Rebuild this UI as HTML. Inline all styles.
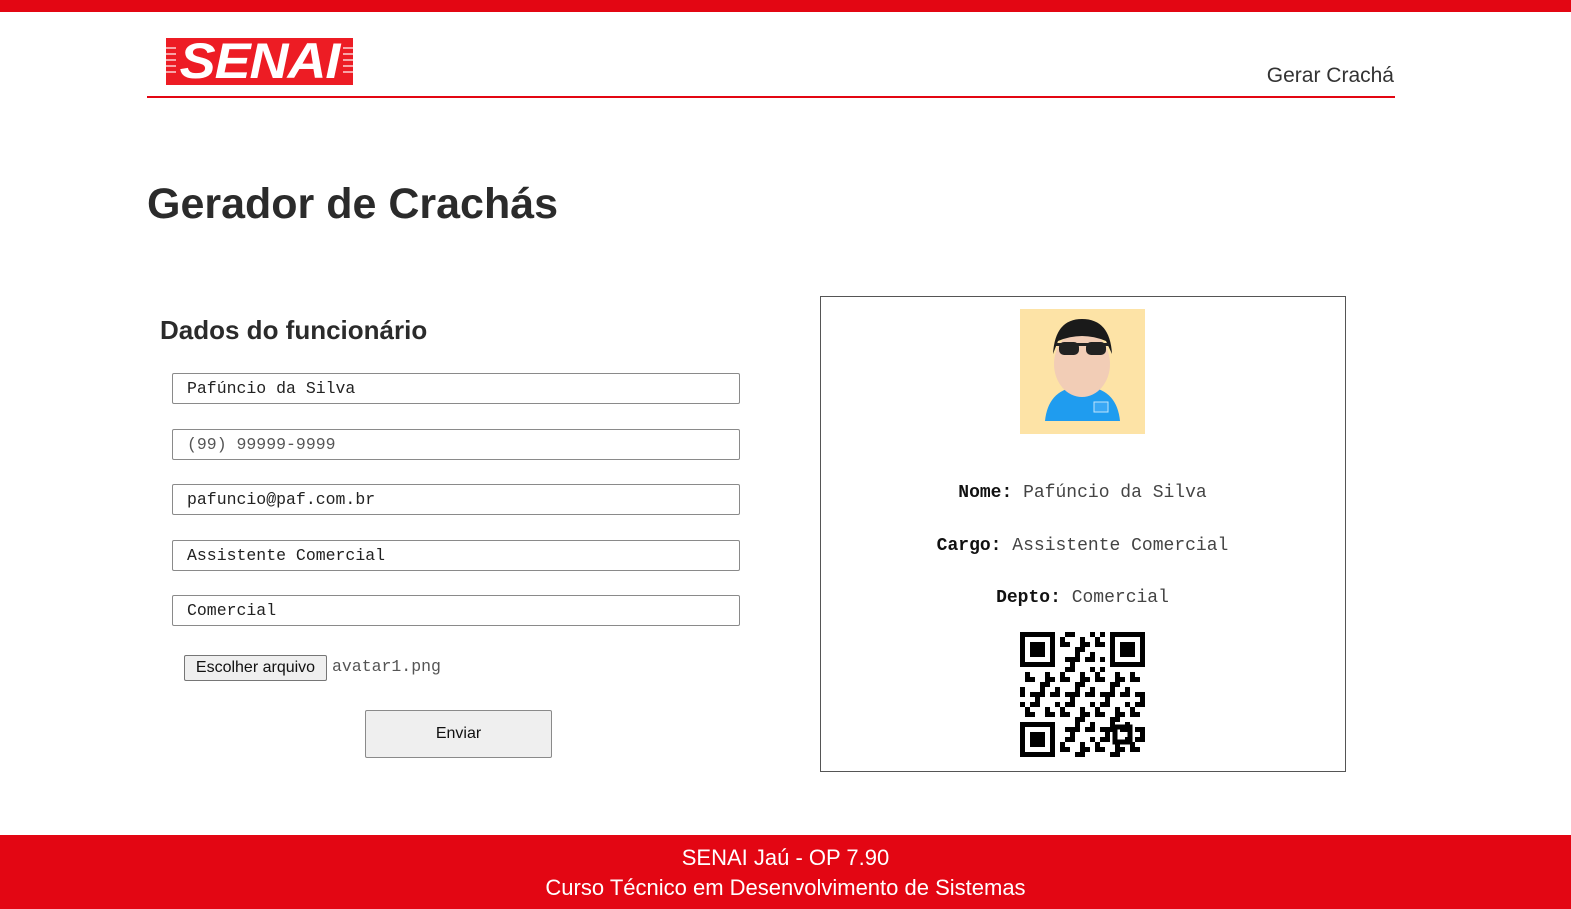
<!DOCTYPE html>
<html><head><meta charset="utf-8"><style>
*{box-sizing:border-box;margin:0;padding:0}
body{width:1571px;height:909px;position:relative;background:#fff;font-family:"Liberation Sans",sans-serif;color:#333;overflow:hidden}
.a{position:absolute}
.inp{position:absolute;left:172px;width:568px;height:31px;border:1px solid #8a8a8a;border-radius:2px;font-family:"Liberation Mono",monospace;font-size:16.5px;padding-left:14px;line-height:29px;color:#222}
.lab{font-family:"Liberation Mono",monospace;font-size:18px;color:#444;position:absolute;width:525px;text-align:center;left:820px}
.lab b{color:#111}
</style></head><body>
<div class="a" style="left:0;top:0;width:1571px;height:12px;background:#e30613"></div>
<div class="a" style="left:166px;top:38px;width:187px;height:47px;background:#ed1c24;overflow:hidden">
<svg width="187" height="47" style="position:absolute;left:0;top:0"><g stroke="#fff" stroke-width="1.5" opacity=".8"><line x1="0" y1="10" x2="10" y2="10"/><line x1="0" y1="16" x2="10" y2="16"/><line x1="0" y1="22" x2="10" y2="22"/><line x1="0" y1="28" x2="10" y2="28"/><line x1="0" y1="34" x2="10" y2="34"/><line x1="177" y1="10" x2="187" y2="10"/><line x1="177" y1="16" x2="187" y2="16"/><line x1="177" y1="22" x2="187" y2="22"/><line x1="177" y1="28" x2="187" y2="28"/><line x1="177" y1="34" x2="187" y2="34"/></g></svg>
<div class="a" style="left:10px;top:-4px;width:167px;text-align:center;color:#fff;font:italic 900 50px/54px 'Liberation Sans',sans-serif;letter-spacing:-1px;transform:scaleX(1.08)">SENAI</div></div>
<div class="a" style="right:177px;top:64px;font-size:21px;color:#333">Gerar Crachá</div>
<div class="a" style="left:147px;top:96px;width:1248px;height:2px;background:#e30613"></div>
<div class="a" style="left:147px;top:180px;font-size:43px;font-weight:bold;color:#2b2b2b">Gerador de Crachás</div>
<div class="a" style="left:160px;top:315px;font-size:26px;font-weight:bold;color:#2b2b2b">Dados do funcionário</div>
<div class="inp" style="top:373px">Pafúncio da Silva</div>
<div class="inp" style="top:429px;color:#555">(99) 99999-9999</div>
<div class="inp" style="top:484px">pafuncio@paf.com.br</div>
<div class="inp" style="top:540px">Assistente Comercial</div>
<div class="inp" style="top:595px">Comercial</div>
<div class="a" style="left:184px;top:655px;width:143px;height:26px;border:1px solid #767676;background:#efefef;border-radius:2px;font-size:16px;text-align:center;line-height:24px;color:#111">Escolher arquivo</div>
<div class="a" style="left:332px;top:657px;font-family:'Liberation Mono',monospace;font-size:16.5px;color:#555">avatar1.png</div>
<div class="a" style="left:365px;top:710px;width:187px;height:48px;border:1px solid #8a8a8a;background:#efefef;border-radius:2px;font-size:16px;text-align:center;line-height:46px;color:#111">Enviar</div>
<div class="a" style="left:820px;top:296px;width:526px;height:476px;border:1px solid #555"></div>
<svg class="a" style="left:1020px;top:309px" width="125" height="125"><rect width="125" height="125" fill="#fde3a6"/>
<path d="M25 112 Q28 82 55 78 L70 78 Q97 82 100 112 Z" fill="#1f9cef"/>
<rect x="74" y="93" width="14" height="10" fill="#3aa8f5" stroke="#bfe3fb"/>
<ellipse cx="62" cy="55" rx="28" ry="33" fill="#f2cdb6"/>
<path d="M33 45 Q35 10 62 10 Q90 10 92 45 L86 32 Q62 22 38 32 Z" fill="#1a1a1a"/>
<rect x="39" y="33" width="20" height="13" rx="5" fill="#222"/><rect x="66" y="33" width="20" height="13" rx="5" fill="#222"/><rect x="36" y="34" width="53" height="3" fill="#222"/>
</svg>
<div class="lab" style="top:483px"><b>Nome:</b> Pafúncio da Silva</div>
<div class="lab" style="top:536px"><b>Cargo:</b> Assistente Comercial</div>
<div class="lab" style="top:588px"><b>Depto:</b> Comercial</div>
<svg class="a" style="left:1020px;top:632px" width="125" height="125" shape-rendering="crispEdges">
<defs><pattern id="p" width="35" height="35" patternUnits="userSpaceOnUse"><rect x="0" y="0" width="5" height="5"/><rect x="10" y="0" width="10" height="5"/><rect x="25" y="5" width="5" height="10"/><rect x="5" y="10" width="10" height="5"/><rect x="20" y="15" width="10" height="5"/><rect x="0" y="20" width="5" height="10"/><rect x="10" y="25" width="15" height="5"/><rect x="30" y="25" width="5" height="5"/><rect x="15" y="30" width="5" height="5"/><rect x="30" y="10" width="5" height="5"/><rect x="5" y="5" width="5" height="5"/><rect x="20" y="20" width="5" height="5"/></pattern></defs>
<rect width="125" height="125" fill="url(#p)"/>
<g><rect x="0" y="0" width="40" height="40" fill="#fff"/><rect x="85" y="0" width="40" height="40" fill="#fff"/><rect x="0" y="85" width="40" height="40" fill="#fff"/>
<path d="M0 0h35v35h-35z M5 5v25h25v-25z" fill="#000" fill-rule="evenodd"/><rect x="10" y="10" width="15" height="15"/>
<path d="M90 0h35v35h-35z M95 5v25h25v-25z" fill="#000" fill-rule="evenodd"/><rect x="100" y="10" width="15" height="15"/>
<path d="M0 90h35v35h-35z M5 95v25h25v-25z" fill="#000" fill-rule="evenodd"/><rect x="10" y="100" width="15" height="15"/>
<rect x="95" y="95" width="15" height="15" fill="none" stroke="#000" stroke-width="5"/></g>
</svg>
<div class="a" style="left:0;top:835px;width:1571px;height:74px;background:#e30613;color:#fff;text-align:center;font-size:22px;line-height:30px;padding-top:8px">SENAI Jaú - OP 7.90<br>Curso Técnico em Desenvolvimento de Sistemas</div>
</body></html>
